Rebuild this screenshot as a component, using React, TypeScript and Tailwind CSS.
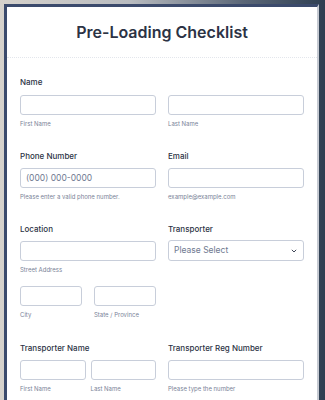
import React from "react";

const font = { fontFamily: "Inter, 'Noto Sans', sans-serif" };

function Label({ children }: { children: React.ReactNode }) {
  return (
    <div className="text-[8px] leading-[12px] font-medium text-[#2c3345] h-[12px] whitespace-nowrap">
      {children}
    </div>
  );
}

function Input({ placeholder, className = "" }: { placeholder?: string; className?: string }) {
  return (
    <div
      className={`h-[20px] border border-[#c8ceda] rounded-[3px] bg-white flex items-center px-[5px] text-[8.5px] text-[#6f7a91] ${className}`}
    >
      {placeholder}
    </div>
  );
}

function Sub({ children }: { children: React.ReactNode }) {
  return (
    <div className="text-[6px] leading-[8px] h-[8px] text-[#7a8398] mt-[5px] whitespace-nowrap">
      {children}
    </div>
  );
}

export default function App() {
  return (
    <div
      className="w-[325px] h-[400px] overflow-hidden pl-[4px] pt-[4px]"
      style={{ ...font, background: "linear-gradient(to right, #d6d2cc 0%, #b9bcc0 40%, #5a6677 75%, #2f3f52 100%)" }}
    >
      <div className="w-[315px] h-[400px] bg-white border-l-[3px] border-t-[3px] border-r-2 border-l-[#3b4a6c] border-t-[#3b4a6c] border-r-[#c6cad2]">
        <div className="pt-[13px] text-center text-[16px] leading-[24px] font-semibold text-[#2c3345]">
          Pre-Loading Checklist
        </div>
        <div className="mt-[13px] border-t border-dotted border-[#e3e6ec]" />
        <div className="px-[13px] pt-[18px]">
          {/* Row 1 */}
          <div className="grid grid-cols-2 gap-x-[12px]">
            <div>
              <Label>Name</Label>
              <Input className="mt-[7px]" />
              <Sub>First Name</Sub>
            </div>
            <div>
              <div className="h-[12px]" />
              <Input className="mt-[7px]" />
              <Sub>Last Name</Sub>
            </div>
          </div>
          {/* Row 2 */}
          <div className="grid grid-cols-2 gap-x-[12px] mt-[22px]">
            <div>
              <Label>Phone Number</Label>
              <Input className="mt-[6px]" placeholder="(000) 000-0000" />
              <Sub>Please enter a valid phone number.</Sub>
            </div>
            <div>
              <Label>Email</Label>
              <Input className="mt-[6px]" />
              <Sub>example@example.com</Sub>
            </div>
          </div>
          {/* Row 3 */}
          <div className="grid grid-cols-2 gap-x-[12px] mt-[22px]">
            <div>
              <Label>Location</Label>
              <Input className="mt-[6px]" />
              <Sub>Street Address</Sub>
              <div className="grid grid-cols-2 gap-x-[12px] mt-[12px]">
                <div>
                  <Input />
                  <Sub>City</Sub>
                </div>
                <div>
                  <Input />
                  <Sub>State / Province</Sub>
                </div>
              </div>
            </div>
            <div>
              <Label>Transporter</Label>
              <div className="mt-[5px] h-[21px] border border-[#c8ceda] rounded-[3px] bg-white flex items-center justify-between px-[5px] text-[8.5px] text-[#6f7a91]">
                <span>Please Select</span>
                <svg width="6" height="4" viewBox="0 0 6 4" className="mr-[1px]">
                  <path d="M0.8 0.8 L3 3 L5.2 0.8" fill="none" stroke="#2c3345" strokeWidth="0.9" />
                </svg>
              </div>
            </div>
          </div>
          {/* Row 4 */}
          <div className="grid grid-cols-2 gap-x-[12px] mt-[23px]">
            <div>
              <Label>Transporter Name</Label>
              <div className="grid grid-cols-2 gap-x-[5px] mt-[6px]">
                <div>
                  <Input />
                  <Sub>First Name</Sub>
                </div>
                <div>
                  <Input />
                  <Sub>Last Name</Sub>
                </div>
              </div>
            </div>
            <div>
              <Label>Transporter Reg Number</Label>
              <Input className="mt-[6px]" />
              <Sub>Please type the number</Sub>
            </div>
          </div>
        </div>
      </div>
    </div>
  );
}
